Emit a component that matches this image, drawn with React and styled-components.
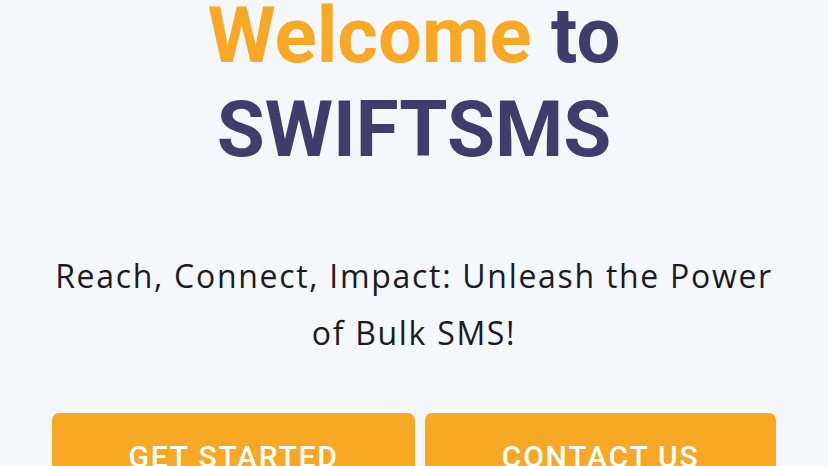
import React from "react";
import styled, { createGlobalStyle } from "styled-components";

const Global = createGlobalStyle`
  html, body { margin: 0; padding: 0; background: #f4f7fc; }
  body { overflow: hidden; }
`;

const Page = styled.main`
  width: 828px;
  min-height: 466px;
  background: #f4f7fc;
  display: flex;
  justify-content: center;
`;

const Hero = styled.section`
  width: 724px;
  display: flex;
  flex-direction: column;
  align-items: stretch;
  margin-top: -11px;
`;

const Title = styled.h1`
  margin: 0;
  font-family: Roboto, "Liberation Sans", sans-serif;
  font-weight: 700;
  font-size: 78px;
  line-height: 94px;
  text-align: center;
  color: #3f3d6b;
`;

const Accent = styled.span`
  color: #f9a826;
`;

const Subtitle = styled.p`
  margin: 70px 0 0;
  font-family: "Open Sans", "Noto Sans", sans-serif;
  font-weight: 400;
  font-size: 32px;
  letter-spacing: 1.7px;
  line-height: 57px;
  text-align: center;
  color: #1c1b22;
`;

const Actions = styled.div`
  display: flex;
  gap: 10px;
  margin-top: 52px;
`;

const Button = styled.button`
  flex: 1 1 auto;
  height: 84px;
  border: none;
  border-radius: 7px;
  background: #f9a826;
  color: #ffffff;
  font-family: Roboto, "Liberation Sans", sans-serif;
  font-weight: 500;
  font-size: 30px;
  letter-spacing: 1.8px;
  text-transform: uppercase;
  padding: 26px 20px 0;
  display: flex;
  align-items: flex-start;
  justify-content: center;
  cursor: pointer;
`;

export default function App() {
  return (
    <>
      <Global />
      <Page>
        <Hero>
          <Title>
            <Accent>Welcome</Accent> to
            <br />
            SWIFTSMS
          </Title>
          <Subtitle>
            Reach, Connect, Impact: Unleash the Power
            <br />
            of Bulk SMS!
          </Subtitle>
          <Actions>
            <Button>Get Started</Button>
            <Button>Contact Us</Button>
          </Actions>
        </Hero>
      </Page>
    </>
  );
}
